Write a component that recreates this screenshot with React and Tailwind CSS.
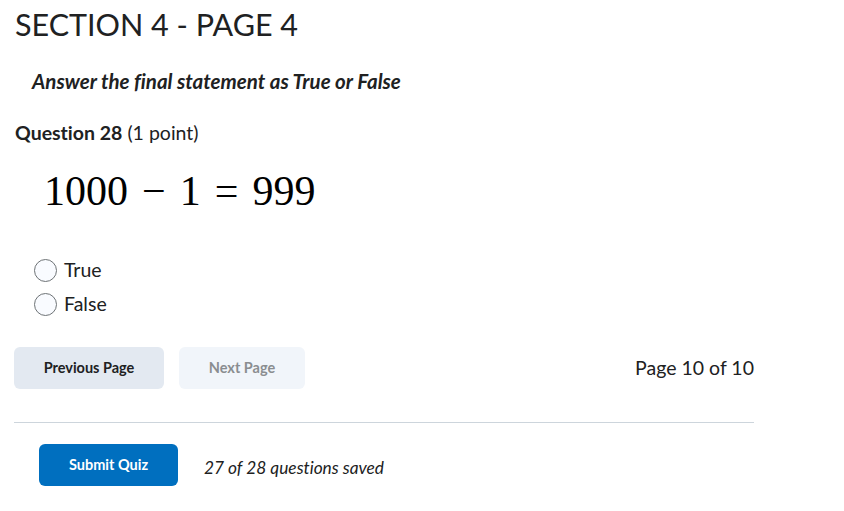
import React from 'react';

const Radio = ({ label }) => (
  <label className="flex items-center gap-[7px] h-[34px]">
    <span className="w-[23px] h-[23px] rounded-full border border-[#6e7376] bg-[#f9fbff]"></span>
    <span className="text-[19.5px] text-[#202122]">{label}</span>
  </label>
);

export default function App() {
  return (
    <div className="w-[844px] h-[511px] bg-white font-['Lato',sans-serif] text-[#202122] overflow-hidden [font-variant-ligatures:none]">
      <div className="w-[740px] ml-[14px]">
        <h1 className="text-[30.5px] leading-[34px] pt-[7px] ml-px">SECTION 4 - PAGE 4</h1>

        <p className="mt-[29px] ml-[18px] text-[20.5px] font-bold italic leading-[22px]">
          Answer the final statement as True or False
        </p>

        <p className="mt-[30px] ml-px text-[19.5px] leading-[22px]">
          <span className="font-bold">Question 28</span> (1 point)
        </p>

        <div className="mt-[25px] ml-[30px] font-['Liberation_Serif',serif] text-[42px] leading-[44px] text-black flex">
          <span>1000</span>
          <span className="mx-[14px]">−</span>
          <span>1</span>
          <span className="mx-[14px]">=</span>
          <span>999</span>
        </div>

        <div className="mt-[40px] ml-[20px] flex flex-col">
          <Radio label="True" />
          <Radio label="False" />
        </div>

        <div className="mt-[26px] flex items-center">
          <button className="w-[150px] h-[42px] rounded-md bg-[#e3e9f1] text-[14.5px] font-bold text-[#202122]">
            Previous Page
          </button>
          <button className="ml-[15px] w-[126px] h-[42px] rounded-md bg-[#f1f5fa] text-[14.5px] font-bold text-[#8a8d90]">
            Next Page
          </button>
          <span className="ml-auto text-[19.5px]">Page 10 of 10</span>
        </div>

        <hr className="mt-[33px] border-t border-[#cdd5dc]" />

        <div className="mt-[21px] ml-[25px] flex items-center">
          <button className="w-[139px] h-[42px] rounded-md bg-[#006fbf] text-white text-[14.5px] font-bold">
            Submit Quiz
          </button>
          <span className="ml-[26px] mt-[5px] italic text-[17.3px]">
            27 of 28 questions saved
          </span>
        </div>
      </div>
    </div>
  );
}
